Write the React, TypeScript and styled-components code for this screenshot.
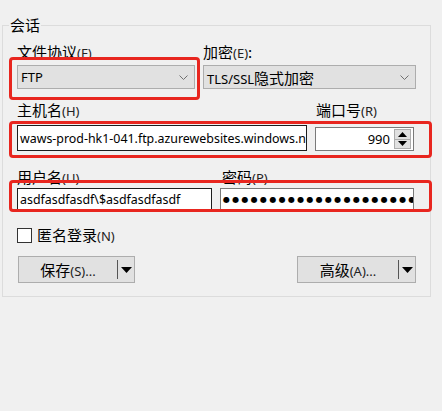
import React from "react"
import styled, { createGlobalStyle } from "styled-components"

const GlobalStyle = createGlobalStyle`
  html, body {
    margin: 0;
    padding: 0;
    background: #f0f0f0;
  }
  body {
    font-family: "Noto Sans", "Noto Sans CJK SC", sans-serif;
    color: #000;
  }
`

const Page = styled.div`
  width: 442px;
  height: 411px;
  padding: 15px 0 0 2px;
  box-sizing: border-box;
`

const Group = styled.fieldset`
  margin: 0;
  width: 428px;
  box-sizing: border-box;
  border: 1px solid #dcdcdc;
  padding: 7px 14px 13px 14px;
`

const Legend = styled.legend`
  margin-left: -8px;
  padding: 0 1px;
  font-family: "Noto Sans CJK SC", sans-serif;
  font-size: 15px;
  line-height: 20px;
`

const Form = styled.div`
  display: flex;
  flex-direction: column;
`

const Row = styled.div<{ $top: number }>`
  display: flex;
  gap: 8px;
  margin-top: ${(p) => p.$top}px;
`

const Field = styled.div<{ $w: number }>`
  display: flex;
  flex-direction: column;
  width: ${(p) => p.$w}px;
  flex: none;
`

const Label = styled.div<{ $gap: number; $indent?: number }>`
  font-family: "Noto Sans CJK SC", sans-serif;
  font-size: 15px;
  line-height: 20px;
  height: 20px;
  margin-bottom: ${(p) => p.$gap}px;
  padding-left: ${(p) => p.$indent ?? 0}px;
  white-space: nowrap;
`

const Key = styled.span`
  font-family: "Noto Sans", sans-serif;
  font-size: 13px;
  color: #222;
`

const Controls = styled.div`
  position: relative;
  display: flex;
  gap: 8px;
  align-items: flex-end;
`

const RedFrame = styled.div<{ $t: number; $r: number; $b: number; $l: number }>`
  position: absolute;
  top: ${(p) => p.$t}px;
  right: ${(p) => p.$r}px;
  bottom: ${(p) => p.$b}px;
  left: ${(p) => p.$l}px;
  border: 3px solid #e8261f;
  border-radius: 4px;
  pointer-events: none;
  z-index: 2;
`

const Select = styled.div<{ $w: number }>`
  width: ${(p) => p.$w}px;
  height: 24px;
  box-sizing: border-box;
  background: #e1e1e1;
  border: 1px solid #adadad;
  display: flex;
  align-items: center;
  justify-content: space-between;
  padding: 0 6px 0 3px;
  font-size: 13px;
  white-space: nowrap;
  font-family: "Noto Sans", "Noto Sans CJK SC", sans-serif;
`

const Cjk = styled.span`
  font-family: "Noto Sans CJK SC", sans-serif;
  font-size: 15px;
`

const Edit = styled.div<{ $w: number; $h: number; $dark?: boolean; $right?: boolean }>`
  width: ${(p) => p.$w}px;
  height: ${(p) => p.$h}px;
  box-sizing: border-box;
  background: #fff;
  border: 1px solid ${(p) => (p.$dark ? "#1e1e1e" : "#7a7a7a")};
  display: flex;
  align-items: center;
  justify-content: ${(p) => (p.$right ? "flex-end" : "flex-start")};
  padding: 0 2px 0 2px;
  overflow: hidden;
  white-space: nowrap;
  font-size: 12.4px;
  font-family: "Noto Sans", sans-serif;
`

const PortValue = styled.span`
  margin-right: 4px;
  font-size: 13px;
`

const Spin = styled.div`
  display: flex;
  flex-direction: column;
  width: 17px;
  height: 20px;
  flex: none;
`

const SpinBtn = styled.div`
  flex: 1;
  background: #e1e1e1;
  border: 1px solid #adadad;
  display: flex;
  align-items: center;
  justify-content: center;
  & + & {
    border-top: none;
  }
`

const Dots = styled.span`
  font-family: "DejaVu Sans", sans-serif;
  font-size: 8px;
  letter-spacing: 2.3px;
`

const CheckRow = styled.div`
  display: flex;
  align-items: center;
  gap: 5px;
  margin-top: 17px;
  height: 15px;
`

const Box = styled.div`
  width: 15px;
  height: 15px;
  box-sizing: border-box;
  border: 1px solid #333;
  background: #fff;
`

const CheckText = styled.span`
  font-family: "Noto Sans CJK SC", sans-serif;
  font-size: 15px;
  line-height: 20px;
`

const Buttons = styled.div`
  display: flex;
  justify-content: space-between;
  margin-top: 13px;
  padding-left: 1px;
`

const SplitButton = styled.div<{ $w: number }>`
  width: ${(p) => p.$w}px;
  height: 27px;
  box-sizing: border-box;
  background: #e1e1e1;
  border: 1px solid #adadad;
  display: flex;
  align-items: center;
`

const ButtonText = styled.span`
  flex: 1;
  text-align: center;
  font-family: "Noto Sans CJK SC", sans-serif;
  font-size: 15px;
`

const Divider = styled.div`
  width: 1px;
  height: 19px;
  background: #555;
  flex: none;
`

const Arrow = styled.div`
  width: 16px;
  display: flex;
  justify-content: center;
  flex: none;
`

const Chevron = () => (
  <svg width="9" height="5" viewBox="0 0 9 5">
    <path d="M0.5 0.5 L4.5 4.5 L8.5 0.5" fill="none" stroke="#707070" strokeWidth="1" />
  </svg>
)

const Tri = ({ up }: { up?: boolean }) => (
  <svg width="9" height="5" viewBox="0 0 9 5">
    <path d={up ? "M0 5 L4.5 0 L9 5 Z" : "M0 0 L9 0 L4.5 5 Z"} fill="#000" />
  </svg>
)

const DownTri = () => (
  <svg width="11" height="6" viewBox="0 0 11 6">
    <path d="M0 0 L11 0 L5.5 6 Z" fill="#000" />
  </svg>
)

export default function App() {
  return (
    <Page>
      <GlobalStyle />
      <Group>
        <Legend>会话</Legend>
        <Form>
          <Row $top={0}>
            <Field $w={178}>
              <Label $gap={3}>
                文件协议<Key>(F)</Key>
              </Label>
              <Controls>
                <Select $w={178}>
                  FTP
                  <Chevron />
                </Select>
                <RedFrame $t={-8} $r={-5} $b={-11} $l={-8} />
              </Controls>
            </Field>
            <Field $w={213}>
              <Label $gap={3}>
                加密<Key>(E)</Key>:
              </Label>
              <Select $w={213}>
                <span>
                  TLS/SSL<Cjk>隐式加密</Cjk>
                </span>
                <Chevron />
              </Select>
            </Field>
          </Row>

          <Row $top={11}>
            <Field $w={397}>
              <Controls>
                <Field $w={290}>
                  <Label $gap={5}>
                    主机名<Key>(H)</Key>
                  </Label>
                </Field>
                <Field $w={99}>
                  <Label $gap={5} $indent={1}>
                    端口号<Key>(R)</Key>
                  </Label>
                </Field>
              </Controls>
              <Controls>
                <Edit $w={290} $h={26} $dark>
                  waws-prod-hk1-041.ftp.azurewebsites.windows.net
                </Edit>
                <Edit $w={99} $h={24} $right>
                  <PortValue>990</PortValue>
                  <Spin>
                    <SpinBtn>
                      <Tri up />
                    </SpinBtn>
                    <SpinBtn>
                      <Tri />
                    </SpinBtn>
                  </Spin>
                </Edit>
                <RedFrame $t={-4} $r={-18} $b={-7} $l={-8} />
              </Controls>
            </Field>
          </Row>

          <Row $top={16}>
            <Field $w={397}>
              <Controls>
                <Field $w={195}>
                  <Label $gap={1}>
                    用户名<Key>(U)</Key>
                  </Label>
                </Field>
                <Field $w={194}>
                  <Label $gap={1} $indent={2}>
                    密码<Key>(P)</Key>
                  </Label>
                </Field>
              </Controls>
              <Controls>
                <Edit $w={195} $h={23} $dark>
                  asdfasdfasdf\$asdfasdfasdf
                </Edit>
                <Edit $w={194} $h={23}>
                  <Dots>{"●".repeat(25)}</Dots>
                </Edit>
                <RedFrame $t={-8} $r={-18} $b={-1} $l={-8} />
              </Controls>
            </Field>
          </Row>

          <CheckRow>
            <Box />
            <CheckText>
              匿名登录<Key>(N)</Key>
            </CheckText>
          </CheckRow>

          <Buttons>
            <SplitButton $w={117}>
              <ButtonText>
                保存<Key>(S)...</Key>
              </ButtonText>
              <Divider />
              <Arrow>
                <DownTri />
              </Arrow>
            </SplitButton>
            <SplitButton $w={119}>
              <ButtonText>
                高级<Key>(A)...</Key>
              </ButtonText>
              <Divider />
              <Arrow>
                <DownTri />
              </Arrow>
            </SplitButton>
          </Buttons>
        </Form>
      </Group>
    </Page>
  )
}
